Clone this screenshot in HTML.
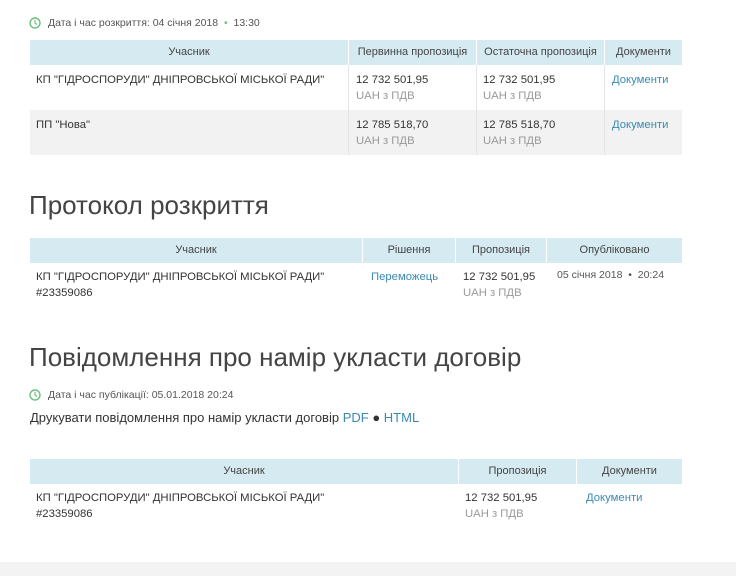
<!DOCTYPE html>
<html><head><meta charset="utf-8"><style>
body{margin:0;width:736px;height:576px;background:#fff;font-family:"Liberation Sans",sans-serif;color:#333;position:relative;overflow:hidden}
.a{position:absolute;white-space:nowrap}
.h{position:absolute;background:#d6eaf1;font-size:11px;color:#444;text-align:center;line-height:25px;height:25px}
.c{position:absolute;font-size:11.3px;line-height:16px;color:#333}
.g{color:#999}
.l{color:#3a8ab0}
h2{position:absolute;margin:0;font-weight:normal;font-size:26px;color:#444;left:29px}
svg.clk{position:absolute}
</style></head><body>
<svg class="clk" style="left:29px;top:17px" width="12" height="12" viewBox="0 0 12 12"><circle cx="6" cy="6" r="5" fill="none" stroke="#6cc17e" stroke-width="1.4"/><path d="M6 3V6L8 7.5" fill="none" stroke="#6cc17e" stroke-width="1.2"/></svg>
<div class="a" style="left:48px;top:17px;font-size:10.5px;color:#555">Дата і час розкриття: 04 січня 2018 &nbsp;<span style="color:#6cc17e">•</span>&nbsp; 13:30</div>
<div style="position:absolute;left:30px;top:110px;width:652px;height:45px;background:#f1f2f1"></div>
<div class="h" style="left:30px;top:40px;width:318px">Учасник</div>
<div class="h" style="left:349px;top:40px;width:127px">Первинна пропозиція</div>
<div class="h" style="left:477px;top:40px;width:127px">Остаточна пропозиція</div>
<div class="h" style="left:605px;top:40px;width:77px">Документи</div>
<div style="position:absolute;left:348px;top:65px;width:1px;height:90px;background:#e4e4e4"></div>
<div style="position:absolute;left:476px;top:65px;width:1px;height:90px;background:#e4e4e4"></div>
<div style="position:absolute;left:604px;top:65px;width:1px;height:90px;background:#e4e4e4"></div>
<div class="c a" style="left:36px;top:72px">КП "ГІДРОСПОРУДИ" ДНІПРОВСЬКОЇ МІСЬКОЇ РАДИ"</div>
<div class="c a" style="left:356px;top:72px">12 732 501,95<br><span class="g">UAH з ПДВ</span></div>
<div class="c a" style="left:483px;top:72px">12 732 501,95<br><span class="g">UAH з ПДВ</span></div>
<div class="c a l" style="left:612px;top:72px">Документи</div>
<div class="c a" style="left:36px;top:117px">ПП "Нова"</div>
<div class="c a" style="left:356px;top:117px">12 785 518,70<br><span class="g">UAH з ПДВ</span></div>
<div class="c a" style="left:483px;top:117px">12 785 518,70<br><span class="g">UAH з ПДВ</span></div>
<div class="c a l" style="left:612px;top:117px">Документи</div>

<h2 style="top:190px">Протокол розкриття</h2>
<div class="h" style="left:30px;top:238px;width:332px">Учасник</div>
<div class="h" style="left:363px;top:238px;width:92px">Рішення</div>
<div class="h" style="left:456px;top:238px;width:90px">Пропозиція</div>
<div class="h" style="left:547px;top:238px;width:135px">Опубліковано</div>
<div class="c a" style="left:36px;top:269px">КП "ГІДРОСПОРУДИ" ДНІПРОВСЬКОЇ МІСЬКОЇ РАДИ"<br>#23359086</div>
<div class="c a l" style="left:371px;top:269px">Переможець</div>
<div class="c a" style="left:463px;top:269px">12 732 501,95<br><span class="g">UAH з ПДВ</span></div>
<div class="a" style="left:557px;top:269px;font-size:10.5px;color:#555">05 січня 2018 &nbsp;•&nbsp; 20:24</div>

<h2 style="top:342px">Повідомлення про намір укласти договір</h2>
<svg class="clk" style="left:29px;top:389px" width="12" height="12" viewBox="0 0 12 12"><circle cx="6" cy="6" r="5" fill="none" stroke="#6cc17e" stroke-width="1.4"/><path d="M6 3V6L8 7.5" fill="none" stroke="#6cc17e" stroke-width="1.2"/></svg>
<div class="a" style="left:48px;top:389px;font-size:10.5px;color:#555">Дата і час публікації: 05.01.2018 20:24</div>
<div class="a" style="left:30px;top:410px;font-size:13px;color:#333">Друкувати повідомлення про намір укласти договір <span class="l">PDF</span> ● <span class="l">HTML</span></div>
<div class="h" style="left:30px;top:459px;width:428px">Учасник</div>
<div class="h" style="left:459px;top:459px;width:117px">Пропозиція</div>
<div class="h" style="left:577px;top:459px;width:105px">Документи</div>
<div class="c a" style="left:36px;top:490px">КП "ГІДРОСПОРУДИ" ДНІПРОВСЬКОЇ МІСЬКОЇ РАДИ"<br>#23359086</div>
<div class="c a" style="left:465px;top:490px">12 732 501,95<br><span class="g">UAH з ПДВ</span></div>
<div class="c a l" style="left:586px;top:490px">Документи</div>
<div style="position:absolute;left:0;top:562px;width:736px;height:14px;background:#f3f3f3"></div>
</body></html>
